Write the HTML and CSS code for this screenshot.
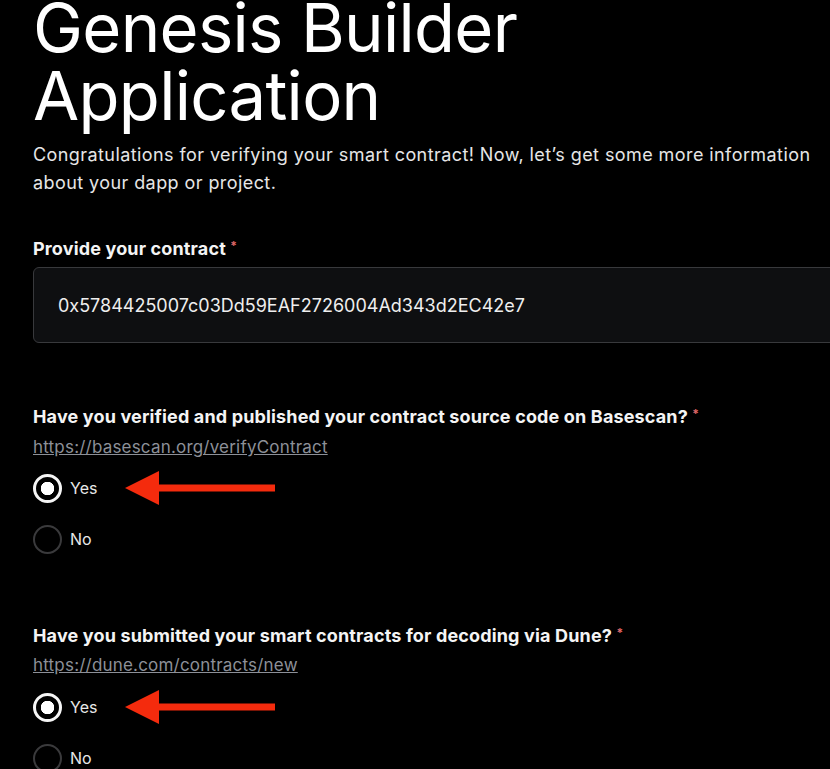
FILE: index.html
```html
<!DOCTYPE html>
<html lang="en">
<head>
  <meta charset="UTF-8">
  <meta name="viewport" content="width=device-width, initial-scale=1.0">
  <title>Genesis Builder Application</title>
  <link rel="stylesheet" href="styles.css">
</head>
<body>
  <div class="page">
    <h1>Genesis Builder Application</h1>
    <p class="intro">Congratulations for verifying your smart contract! Now, let’s get some more information about your dapp or project.</p>

    <div class="field">
      <label class="label" for="contract">Provide your contract <span class="req">*</span></label>
      <input class="text-input" id="contract" type="text" value="0x5784425007c03Dd59EAF2726004Ad343d2EC42e7">
    </div>

    <div class="field question">
      <div class="label">Have you verified and published your contract source code on Basescan? <span class="req">*</span></div>
      <a class="hint" href="#">https://basescan.org/verifyContract</a>
      <div class="options">
        <label class="option">
          <span class="radio checked"></span>
          <span>Yes</span>
          <svg class="arrow" width="152" height="34" viewBox="0 0 152 34"><polygon points="0,17 34,0 34,34" fill="#f42b0d"/><rect x="33" y="13.5" width="117" height="7" fill="#f42b0d"/></svg>
        </label>
        <label class="option">
          <span class="radio"></span>
          <span>No</span>
        </label>
      </div>
    </div>

    <div class="field question second">
      <div class="label">Have you submitted your smart contracts for decoding via Dune? <span class="req">*</span></div>
      <a class="hint" href="#">https://dune.com/contracts/new</a>
      <div class="options">
        <label class="option">
          <span class="radio checked"></span>
          <span>Yes</span>
          <svg class="arrow" width="152" height="34" viewBox="0 0 152 34"><polygon points="0,17 34,0 34,34" fill="#f42b0d"/><rect x="33" y="13.5" width="117" height="7" fill="#f42b0d"/></svg>
        </label>
        <label class="option">
          <span class="radio"></span>
          <span>No</span>
        </label>
      </div>
    </div>
  </div>
</body>
</html>
```

FILE: styles.css
```css
html, body {
  margin: 0;
  background: #000;
  overflow: hidden;
}
body {
  font-family: Inter, "Noto Sans", sans-serif;
  color: #f2f2f2;
}
.page {
  padding-left: 33px;
}
h1 {
  margin: -6px 0 0;
  font-size: 67px;
  line-height: 68px;
  font-weight: 400;
  letter-spacing: -0.7px;
  color: #fff;
  width: 560px;
}
.intro {
  margin: 11px 0 0;
  font-size: 18px;
  line-height: 28px;
  letter-spacing: 0.42px;
  color: #e6e6e6;
  width: 797px;
}
.field {
  margin-top: 37px;
}
.label {
  display: block;
  font-size: 18px;
  line-height: 24px;
  font-weight: 700;
  letter-spacing: 0.15px;
  color: #f4f4f4;
}
.req {
  color: #e0686a;
  font-size: 12px;
  vertical-align: 5px;
}
.text-input {
  display: block;
  box-sizing: border-box;
  width: 820px;
  height: 76px;
  margin-top: 6px;
  padding: 0 24px;
  background: #0e0f11;
  border: 1px solid #38393c;
  border-radius: 6px;
  color: #eee;
  font-family: Inter, "Noto Sans", sans-serif;
  font-size: 18px;
  outline: none;
}
.question {
  margin-top: 59px;
}
.question.second {
  margin-top: 57px;
}
.hint {
  display: block;
  margin-top: 7px;
  font-size: 17px;
  line-height: 22px;
  letter-spacing: 0.2px;
  color: #8d9098;
  text-decoration: underline;
}
.second .hint {
  margin-top: 6px;
}
.options {
  margin-top: 5px;
}
.second .options {
  margin-top: 6px;
}
.option {
  display: flex;
  align-items: center;
  height: 50px;
  font-size: 16px;
  color: #e8e8e8;
}
.option + .option {
  margin-top: 1px;
}
.radio {
  box-sizing: border-box;
  width: 29px;
  height: 29px;
  margin-right: 8px;
  border: 2px solid #3a3a3c;
  border-radius: 50%;
}
.radio.checked {
  border: 3px solid #f5f5f5;
  background: radial-gradient(circle, #fff 0 6.5px, transparent 7px);
}
.arrow {
  margin-left: 28px;
}
```
